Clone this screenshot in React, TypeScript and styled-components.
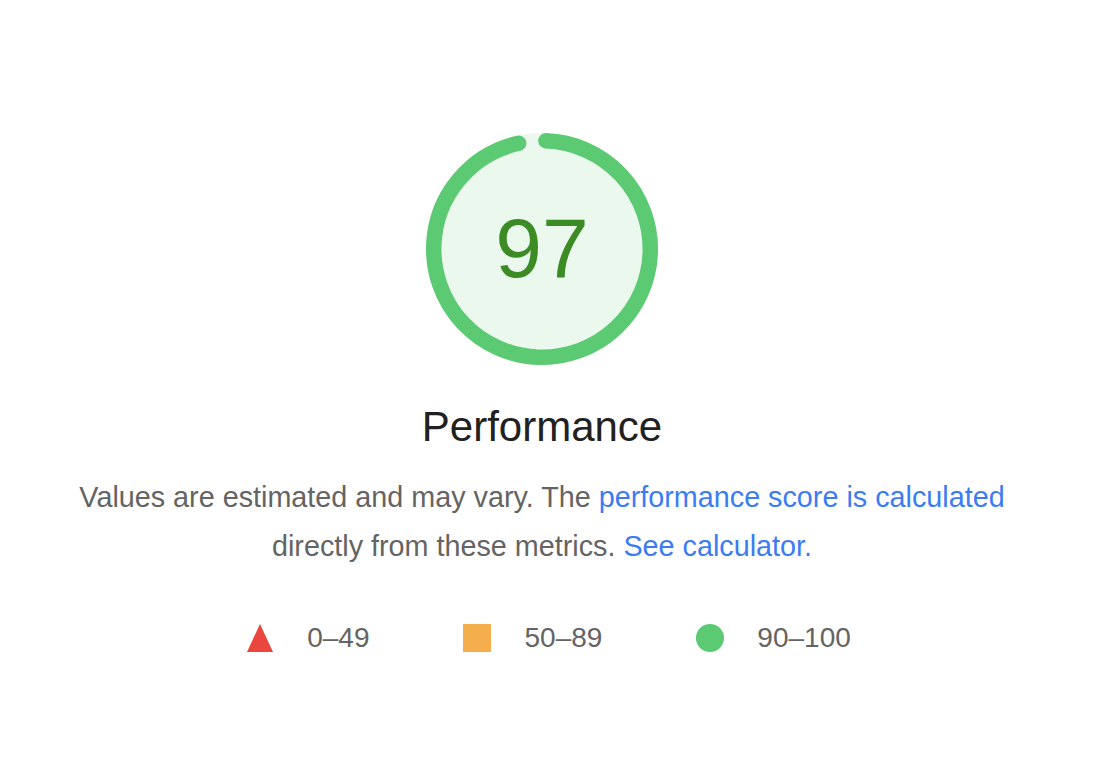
import React from "react";
import styled, { createGlobalStyle } from "styled-components";

const Global = createGlobalStyle`
  html, body {
    margin: 0;
    padding: 0;
    background: #ffffff;
  }
  body {
    font-family: "Liberation Sans", Arial, Helvetica, sans-serif;
  }
`;

const Page = styled.main`
  width: 1084px;
  padding-top: 133px;
  display: flex;
  flex-direction: column;
  align-items: center;
`;

const GaugeWrap = styled.div`
  position: relative;
  width: 232px;
  height: 232px;
`;

const GaugeSvg = styled.svg`
  display: block;
  width: 232px;
  height: 232px;
`;

const GaugeValue = styled.div`
  position: absolute;
  inset: 0;
  display: flex;
  align-items: center;
  justify-content: center;
  font-size: 84px;
  line-height: 1;
  color: #3d8b25;
  padding-bottom: 2px;
`;

const Title = styled.h1`
  margin: 38px 0 0;
  font-size: 42px;
  line-height: 48px;
  font-weight: 400;
  color: #212121;
`;

const Description = styled.p`
  margin: 22px 0 0;
  font-size: 28.75px;
  line-height: 49px;
  color: #646464;
  text-align: center;
  max-width: 960px;
`;

const Link = styled.a`
  color: #3b7cf3;
  text-decoration: none;
`;

const Legend = styled.div`
  margin-top: 53px;
  padding-left: 13px;
  display: flex;
  align-items: center;
  gap: 94px;
`;

const LegendItem = styled.div`
  display: flex;
  align-items: center;
  gap: 33px;
  font-size: 28px;
  line-height: 28px;
  color: #646464;
`;

const Shape = styled.span<{ $kind: "fail" | "average" | "pass" }>`
  display: block;
  width: 28px;
  height: 28px;
  ${({ $kind }) =>
    $kind === "fail"
      ? `
    width: 0;
    height: 0;
    border-left: 13px solid transparent;
    border-right: 13px solid transparent;
    border-bottom: 28px solid #eb463d;
    margin: 0 1px;
  `
      : $kind === "average"
      ? `background: #f4ae4c;`
      : `background: #5cca73; border-radius: 50%;`}
`;

const R = 56;
const STROKE = 8;
const SCORE = 0.97;
const CIRC = 2 * Math.PI * R;
const ROT = -90 + ((0.25 * STROKE) / CIRC) * 360;
const ARC = SCORE * CIRC - STROKE / 2;

function Gauge({ score }: { score: number }) {
  return (
    <GaugeWrap>
      <GaugeSvg viewBox="0 0 120 120">
        <circle cx="60" cy="60" r={R} fill="#eaf8ee" stroke="#eaf8ee" strokeWidth={STROKE} />
        <circle
          cx="60"
          cy="60"
          r={R}
          fill="none"
          stroke="#5cca73"
          strokeWidth={STROKE}
          strokeLinecap="round"
          strokeDasharray={`${ARC} ${CIRC}`}
          transform={`rotate(${ROT} 60 60)`}
        />
      </GaugeSvg>
      <GaugeValue>{score}</GaugeValue>
    </GaugeWrap>
  );
}

export default function App() {
  return (
    <>
      <Global />
      <Page>
        <Gauge score={97} />
        <Title>Performance</Title>
        <Description>
          Values are estimated and may vary. The{" "}
          <Link href="#">performance score is calculated</Link> directly from these
          metrics. <Link href="#">See calculator.</Link>
        </Description>
        <Legend>
          <LegendItem>
            <Shape $kind="fail" />
            <span>0–49</span>
          </LegendItem>
          <LegendItem>
            <Shape $kind="average" />
            <span>50–89</span>
          </LegendItem>
          <LegendItem>
            <Shape $kind="pass" />
            <span>90–100</span>
          </LegendItem>
        </Legend>
      </Page>
    </>
  );
}
